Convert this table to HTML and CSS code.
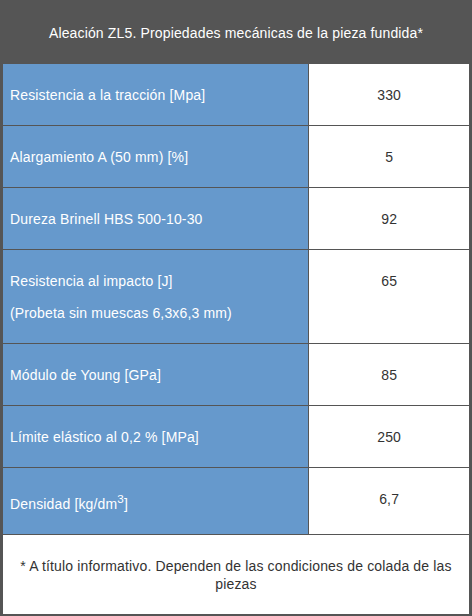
FILE: index.html
```html
<!DOCTYPE html>
<html lang="es">
<head>
<meta charset="utf-8">
<title>Aleación ZL5</title>
<link rel="stylesheet" href="styles.css">
</head>
<body>
<table class="props">
  <colgroup>
    <col class="col-name">
    <col class="col-value">
  </colgroup>
  <thead>
    <tr><th colspan="2" class="title">Aleación ZL5. Propiedades mecánicas de la pieza fundida*</th></tr>
  </thead>
  <tbody>
    <tr><td class="name"><p>Resistencia a la tracción [Mpa]</p></td><td class="value"><p>330</p></td></tr>
    <tr><td class="name"><p>Alargamiento A (50 mm) [%]</p></td><td class="value"><p>5</p></td></tr>
    <tr><td class="name"><p>Dureza Brinell HBS 500-10-30</p></td><td class="value"><p>92</p></td></tr>
    <tr><td class="name"><p>Resistencia al impacto [J]</p><p>(Probeta sin muescas 6,3x6,3 mm)</p></td><td class="value"><p>65</p></td></tr>
    <tr><td class="name"><p>Módulo de Young [GPa]</p></td><td class="value"><p>85</p></td></tr>
    <tr><td class="name"><p>Límite elástico al 0,2 % [MPa]</p></td><td class="value"><p>250</p></td></tr>
    <tr><td class="name"><p>Densidad [kg/dm<sup>3</sup>]</p></td><td class="value"><p>6,7</p></td></tr>
    <tr><td colspan="2" class="note"><p>* A título informativo. Dependen de las condiciones de colada de las piezas</p></td></tr>
  </tbody>
</table>
</body>
</html>
```

FILE: styles.css
```css
html, body {
  margin: 0;
  padding: 0;
  background: #ffffff;
}

.props {
  border-collapse: collapse;
  table-layout: fixed;
  width: 472px;
  border: 3px solid #555555;
  font-family: "Liberation Sans", Arial, sans-serif;
  font-size: 14px;
  line-height: 18px;
  letter-spacing: 0.15px;
}

.col-name { width: 306px; }
.col-value { width: 161px; }

.props th,
.props td {
  border: 1px solid #555555;
  padding: 8px 7px 7px;
  vertical-align: top;
}

.props p {
  margin: 14px 0;
}

.props .title {
  background: #555555;
  color: #ffffff;
  font-weight: normal;
  text-align: center;
  padding: 21px 8px;
}

.props .name {
  background: #6699cc;
  color: #ffffff;
  text-align: left;
}

.props .value {
  background: #ffffff;
  color: #333333;
  text-align: center;
}

.props .note {
  background: #ffffff;
  color: #333333;
  text-align: center;
  padding: 8px 10px 7px;
}
```
